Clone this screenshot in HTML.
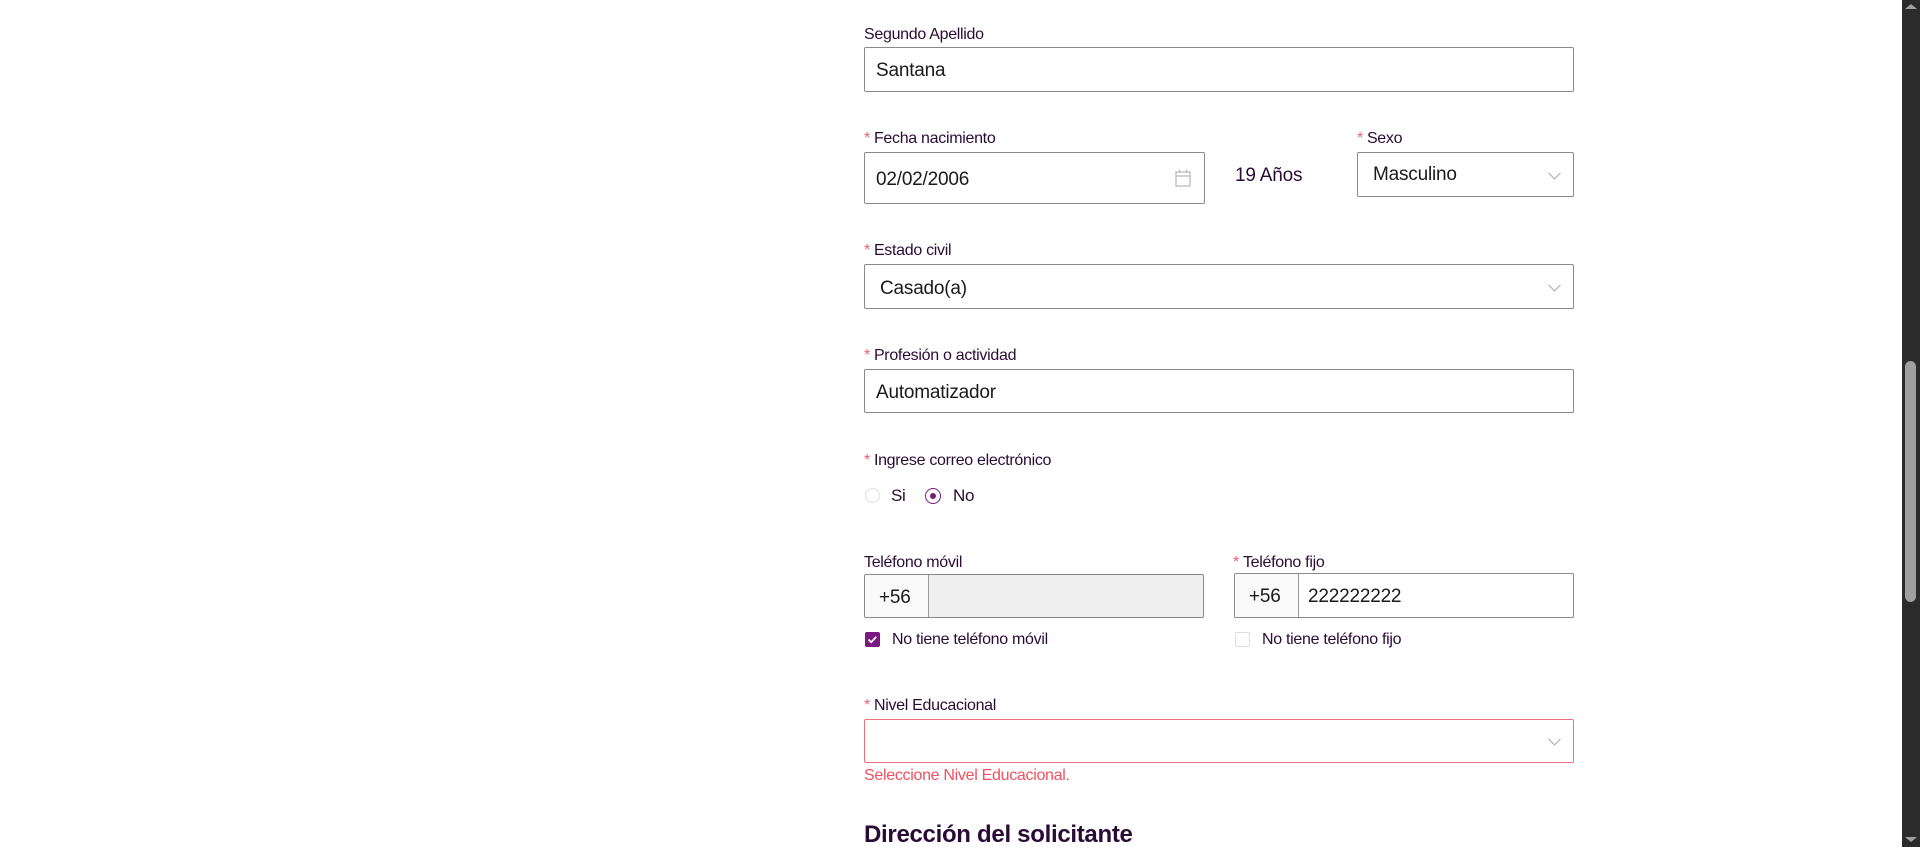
<!DOCTYPE html>
<html><head><meta charset="utf-8"><style>
body{margin:0;width:1920px;height:847px;background:#fff;font-family:"Liberation Sans",sans-serif;color:#2a0b35;position:relative;overflow:hidden}
.a{position:absolute}
.lbl{font-size:16px;letter-spacing:-0.3px}
.req{color:#f0607a;margin-right:4px}
.box{border:1px solid #8a8a8a;border-radius:2px;box-sizing:border-box;background:#fff}
.val{font-size:19px;color:#1a1a1a;letter-spacing:-0.2px}
.chev{position:absolute;right:14px;top:50%;width:8px;height:8px;border-right:1px solid #aaa;border-bottom:1px solid #aaa;transform:translateY(-70%) rotate(45deg)}
</style></head><body>
<div class="a lbl" style="left:864px;top:26px">Segundo Apellido</div>
<div class="a box" style="left:864px;top:47px;width:710px;height:45px"><span class="a val" style="left:11px;top:12px">Santana</span></div>

<div class="a lbl" style="left:864px;top:130px"><span class="req">*</span>Fecha nacimiento</div>
<div class="a box" style="left:864px;top:152px;width:341px;height:52px"><span class="a val" style="left:11px;top:16px">02/02/2006</span>
<svg class="a" style="left:310px;top:16px" width="16" height="18" viewBox="0 0 16 18" fill="none" stroke="#bbb" stroke-width="1.3"><rect x="1" y="3" width="14" height="14"/><line x1="1" y1="7" x2="15" y2="7"/><line x1="4.5" y1="0.5" x2="4.5" y2="4"/><line x1="11.5" y1="0.5" x2="11.5" y2="4"/></svg></div>
<div class="a val" style="left:1235px;top:165px;color:#2a0b35">19 Años</div>
<div class="a lbl" style="left:1357px;top:130px"><span class="req">*</span>Sexo</div>
<div class="a box" style="left:1357px;top:152px;width:217px;height:45px"><span class="a val" style="left:15px;top:11px">Masculino</span><span class="chev"></span></div>

<div class="a lbl" style="left:864px;top:242px"><span class="req">*</span>Estado civil</div>
<div class="a box" style="left:864px;top:264px;width:710px;height:45px"><span class="a val" style="left:15px;top:13px">Casado(a)</span><span class="chev"></span></div>

<div class="a lbl" style="left:864px;top:347px"><span class="req">*</span>Profesión o actividad</div>
<div class="a box" style="left:864px;top:369px;width:710px;height:44px"><span class="a val" style="left:11px;top:12px">Automatizador</span></div>

<div class="a lbl" style="left:864px;top:452px"><span class="req">*</span>Ingrese correo electrónico</div>
<div class="a" style="left:865px;top:488px;width:15px;height:15px;border:1px solid #ddd;border-radius:50%;box-sizing:border-box"></div>
<div class="a lbl" style="left:891px;top:486px;font-size:17px">Si</div>
<div class="a" style="left:925px;top:488px;width:16px;height:16px;border:1px solid #7a1a80;border-radius:50%;box-sizing:border-box"><div style="margin:4px;width:6px;height:6px;border-radius:50%;background:#7a1a80"></div></div>
<div class="a lbl" style="left:953px;top:486px;font-size:17px">No</div>

<div class="a lbl" style="left:864px;top:554px">Teléfono móvil</div>
<div class="a box" style="left:864px;top:574px;width:340px;height:44px;background:#efefef;overflow:hidden"><div style="width:64px;height:100%;background:#fafafa;border-right:1px solid #999;box-sizing:border-box"></div><span class="a val" style="left:14px;top:12px">+56</span></div>
<div class="a lbl" style="left:1233px;top:554px"><span class="req">*</span>Teléfono fijo</div>
<div class="a box" style="left:1234px;top:573px;width:340px;height:45px;overflow:hidden"><div style="width:64px;height:100%;background:#fafafa;border-right:1px solid #999;box-sizing:border-box"></div><span class="a val" style="left:14px;top:12px">+56</span><span class="a val" style="left:73px;top:12px">222222222</span></div>

<div class="a" style="left:865px;top:632px;width:15px;height:15px;background:#7a1a80;border-radius:2px"><svg width="15" height="15" viewBox="0 0 15 15"><path d="M3.5 7.5l2.7 2.7 5-5.4" stroke="#fff" stroke-width="1.8" fill="none"/></svg></div>
<div class="a lbl" style="left:892px;top:631px">No tiene teléfono móvil</div>
<div class="a" style="left:1235px;top:632px;width:15px;height:15px;border:1px solid #ddd;border-radius:2px;box-sizing:border-box"></div>
<div class="a lbl" style="left:1262px;top:631px">No tiene teléfono fijo</div>

<div class="a lbl" style="left:864px;top:697px"><span class="req">*</span>Nivel Educacional</div>
<div class="a box" style="left:864px;top:719px;width:710px;height:44px;border-color:#f0707a"><span class="chev"></span></div>
<div class="a lbl" style="left:864px;top:767px;color:#f0505f">Seleccione Nivel Educacional.</div>
<div class="a" style="left:864px;top:821px;font-size:24px;font-weight:bold;letter-spacing:-0.3px">Dirección del solicitante</div>

<div class="a" style="left:1902px;top:0;width:18px;height:847px;background:#2b2b2b"></div>
<div class="a" style="left:1905px;top:361px;width:11px;height:241px;background:#9f9f9f;border-radius:6px"></div>
<div class="a" style="left:1905px;top:4px;width:0;height:0;border-left:6px solid transparent;border-right:6px solid transparent;border-bottom:5px solid #9f9f9f"></div>
<div class="a" style="left:1905px;top:837px;width:0;height:0;border-left:6px solid transparent;border-right:6px solid transparent;border-top:5px solid #9f9f9f"></div>
</body></html>
